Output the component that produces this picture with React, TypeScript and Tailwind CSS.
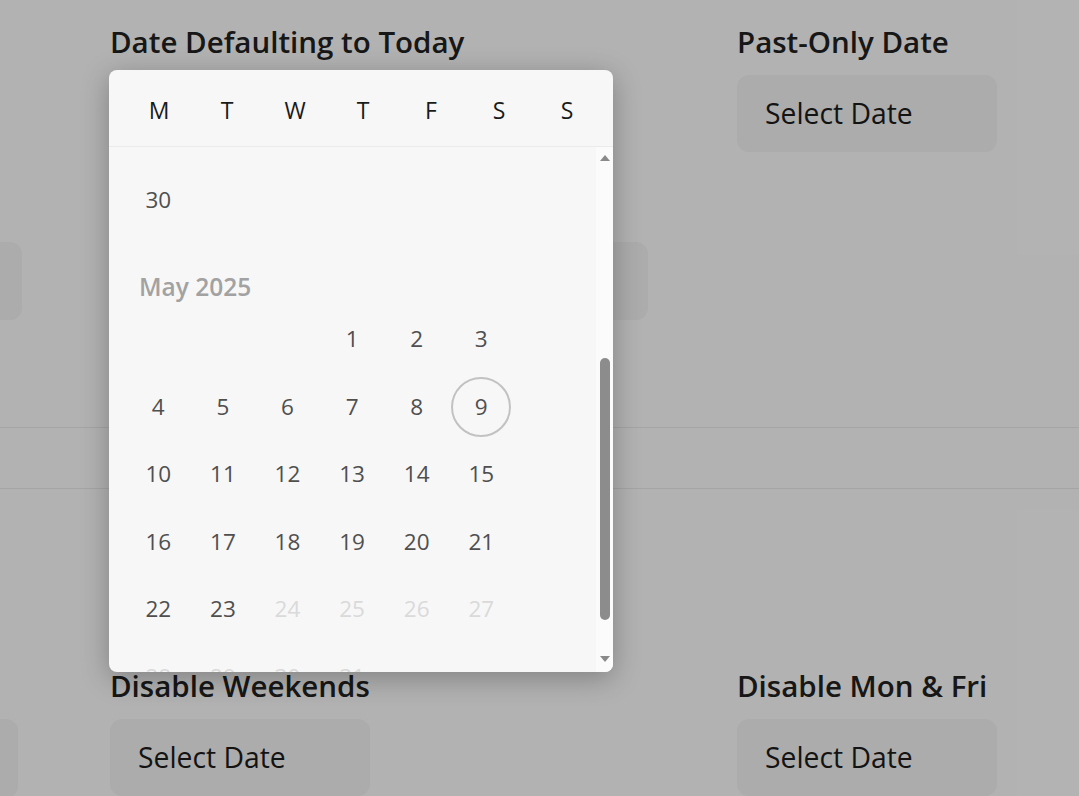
import React from "react";

const weekdays = ["M", "T", "W", "T", "F", "S", "S"];

// rows of the May body, 7 slots each (Sunday slot left empty like the original)
const mayRows: (number | null)[][] = [
  [null, null, null, 1, 2, 3, null],
  [4, 5, 6, 7, 8, 9, null],
  [10, 11, 12, 13, 14, 15, null],
  [16, 17, 18, 19, 20, 21, null],
  [22, 23, 24, 25, 26, 27, null],
  [28, 29, 30, 31, null, null, null],
];

const TODAY = 9;
const MAX_DAY = 23;

function Field({ label, wide }: { label: string; wide?: boolean }) {
  return (
    <div className={wide ? "w-[627px] shrink-0" : "shrink-0"}>
      <h2 className="h-[36px] text-[29.5px] leading-[36px] font-semibold text-[#222] whitespace-nowrap">{label}</h2>
      <div className="mt-[15px] flex h-[77px] w-[260px] items-center rounded-[12px] bg-[#f6f6f6] pl-[28px] text-[28.3px] text-[#1c1c1c]">
        Select Date
      </div>
    </div>
  );
}

function DayCell({ day, disabled, today }: { day: number | null; disabled?: boolean; today?: boolean }) {
  if (day === null) return <div className="h-[67.5px]" />;
  return (
    <div className="flex h-[67.5px] items-center justify-center">
      <div
        className={
          "flex h-[60px] w-[60px] items-center justify-center rounded-full text-[22.5px] " +
          (today ? "border-2 border-[#c2c2c2] " : "") +
          (disabled ? "text-[#dadada]" : "text-[#4f4f4f]")
        }
      >
        {day}
      </div>
    </div>
  );
}

function CalendarPopup() {
  return (
    <div className="absolute left-[109px] top-[70px] z-10 flex h-[602px] w-[504px] flex-col overflow-hidden rounded-[8px] bg-[#f7f7f7] shadow-[0_6px_28px_rgba(0,0,0,0.28)]">
      {/* weekday header */}
      <div className="grid h-[77px] shrink-0 grid-cols-[repeat(7,68px)] items-center border-b border-[#ebebeb] pl-[16px] pt-[4px]">
        {weekdays.map((w, i) => (
          <span key={i} className="text-center text-[23px] font-medium text-[#1a1a1a]">
            {w}
          </span>
        ))}
      </div>

      <div className="flex min-h-0 flex-1">
        {/* scrolled month list */}
        <div className="min-w-0 flex-1 overflow-hidden pl-[17px] pt-[19px]">
          <div className="grid grid-cols-[repeat(7,64.6px)]">
            <DayCell day={30} />
          </div>
          <div className="h-[72px] pl-[13px] pt-[38px]">
            <p className="text-[24.5px] leading-[30px] font-semibold text-[#a2a2a2]">May 2025</p>
          </div>
          {mayRows.map((row, r) => (
            <div key={r} className="grid grid-cols-[repeat(7,64.6px)]">
              {row.map((d, c) => (
                <DayCell key={c} day={d} disabled={d !== null && d > MAX_DAY} today={d === TODAY} />
              ))}
            </div>
          ))}
        </div>

        {/* scrollbar */}
        <div className="flex w-[17px] shrink-0 flex-col items-center bg-[#fbfbfb]">
          <div className="mt-[8px] h-0 w-0 border-x-[5px] border-b-[6px] border-x-transparent border-b-[#8a8a8a]" />
          <div className="mt-[197px] h-[262px] w-[10px] rounded-full bg-[#8c8c8c]" />
          <div className="mt-[36px] h-0 w-0 border-x-[5px] border-t-[6px] border-x-transparent border-t-[#8a8a8a]" />
        </div>
      </div>
    </div>
  );
}

export default function App() {
  return (
    <div className="relative h-[796px] w-[1079px] overflow-hidden bg-white font-['Open_Sans',sans-serif]">
      {/* page under the overlay */}
      <div className="pt-[24px]">
        <div className="flex pl-[110px]">
          <Field label="Date Defaulting to Today" wide />
          <Field label="Past-Only Date" />
        </div>

        <div className="mt-[90px] flex">
          <div className="ml-[-238px] h-[78px] w-[260px] shrink-0 rounded-[12px] bg-[#f6f6f6]" />
          <div className="ml-[366px] h-[78px] w-[260px] shrink-0 rounded-[12px] bg-[#f6f6f6]" />
        </div>

        <div className="mt-[107px] h-[62px] border-y border-[#ececec]" />

        <div className="mt-[179px] flex">
          <div className="ml-[-242px] w-[352px] shrink-0 pt-[51px]">
            <div className="h-[79px] w-[260px] rounded-[12px] bg-[#f6f6f6]" />
          </div>
          <Field label="Disable Weekends" wide />
          <Field label="Disable Mon &amp; Fri" />
        </div>
      </div>

      {/* dim overlay */}
      <div className="absolute inset-0 bg-black/30" />

      <CalendarPopup />
    </div>
  );
}
